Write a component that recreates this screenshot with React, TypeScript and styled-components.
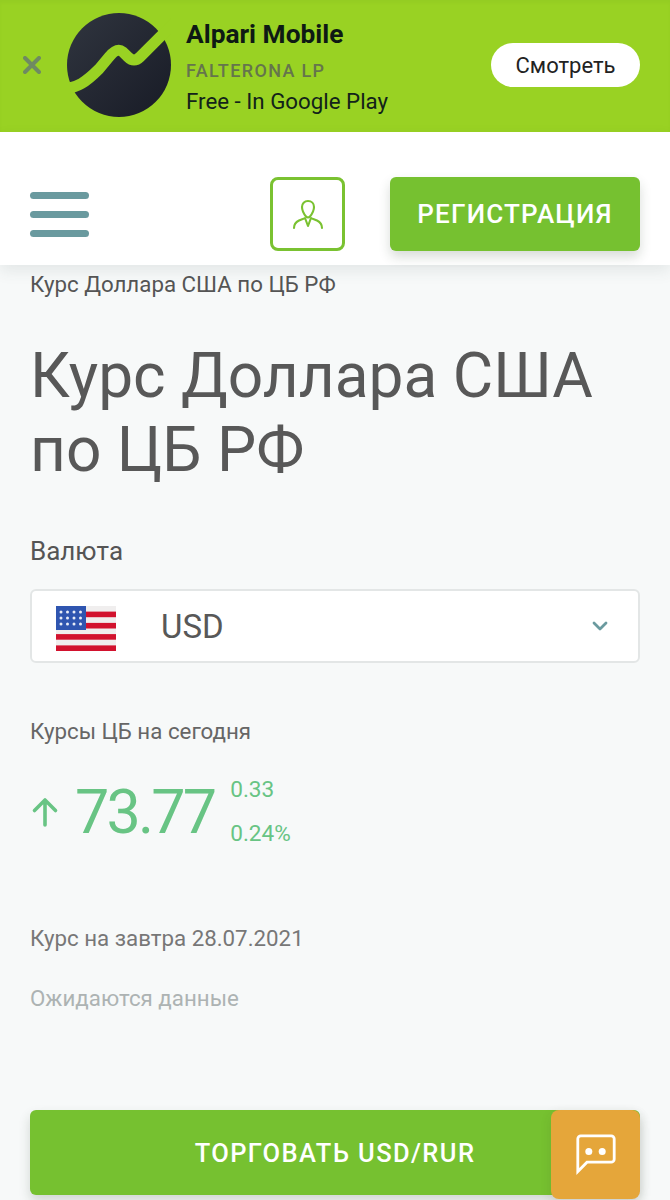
import React from 'react';
import styled, { createGlobalStyle } from 'styled-components';

const GlobalStyle = createGlobalStyle`
  html, body {
    margin: 0;
    padding: 0;
    background: #f7f9f9;
    font-family: Roboto, 'Liberation Sans', sans-serif;
  }
`;

const Page = styled.div`
  position: relative;
  width: 670px;
  height: 1200px;
  overflow: hidden;
  background: #f7f9f9;
`;

const AppBanner = styled.div`
  height: 132px;
  background: #99d223;
  display: flex;
  align-items: center;
  padding: 0 30px 2px 23px;
  box-sizing: border-box;
  box-shadow: inset 0 3px 3px rgba(40, 60, 0, 0.03);
`;

const CloseIcon = styled.svg`
  width: 18px;
  height: 18px;
  margin-right: 26px;
  flex: none;
`;

const AppLogo = styled.svg`
  width: 104px;
  height: 104px;
  flex: none;
  margin-right: 15px;
`;

const AppInfo = styled.div`
  flex: 1;
  display: flex;
  flex-direction: column;
  padding-top: 3px;
  color: #10201a;
`;

const AppName = styled.div`
  font-size: 26.3px;
  line-height: 32px;
  font-weight: 700;
  color: #0e1a14;
`;

const AppVendor = styled.div`
  font-size: 18px;
  line-height: 24px;
  margin-top: 9px;
  font-weight: 500;
  letter-spacing: 1.35px;
  color: #65754c;
`;

const AppPrice = styled.div`
  font-size: 22.3px;
  line-height: 30px;
  margin-top: 3px;
  color: #12231a;
`;

const WatchButton = styled.button`
  width: 149px;
  height: 44px;
  border: 0;
  border-radius: 22px;
  background: #fff;
  color: #222;
  font: 400 22px Roboto, sans-serif;
  padding: 0;
`;

const SiteHeader = styled.header`
  position: relative;
  height: 133px;
  background: #fff;
  display: flex;
  align-items: center;
  padding: 31px 30px 0;
  box-sizing: border-box;
  box-shadow: 0 6px 14px rgba(60, 80, 80, 0.1);
`;

const Burger = styled.div`
  width: 59px;
  display: flex;
  flex-direction: column;
  gap: 12px;
  margin-right: auto;
`;

const BurgerBar = styled.span`
  display: block;
  height: 7px;
  border-radius: 4px;
  background: #6a9a9f;
`;

const UserButton = styled.button`
  width: 75px;
  height: 74px;
  box-sizing: border-box;
  border: 3px solid #7ac231;
  border-radius: 8px;
  background: #fff;
  margin-right: 45px;
  padding: 0;
  display: flex;
  align-items: center;
  justify-content: center;
`;

const PrimaryButton = styled.button<{ $wide?: boolean }>`
  width: ${props => (props.$wide ? '610px' : '250px')};
  height: ${props => (props.$wide ? '85px' : '74px')};
  border: 0;
  border-radius: 6px;
  background: #76c130;
  color: #fff;
  font: 500 ${props => (props.$wide ? '25.5px' : '26px')} Roboto, sans-serif;
  letter-spacing: ${props => (props.$wide ? '1.4px' : '1.2px')};
  padding: 0;
  box-shadow: 0 6px 12px rgba(40, 60, 40, 0.18);
`;

const Content = styled.main`
  padding: 0 30px;
`;

const Breadcrumb = styled.div`
  font-size: 22.3px;
  line-height: 24px;
  margin-top: 7px;
  color: #555;
`;

const Title = styled.h1`
  font-size: 62.2px;
  line-height: 74px;
  font-weight: 400;
  color: #585858;
  margin: 43px 0 0;
`;

const FieldLabel = styled.div`
  font-size: 26px;
  line-height: 30px;
  color: #555;
  margin-top: 49px;
`;

const CurrencySelect = styled.div`
  height: 74px;
  margin-top: 23px;
  box-sizing: border-box;
  background: #fff;
  border: 2px solid #e3e6e6;
  border-radius: 6px;
  display: flex;
  align-items: center;
  padding: 0 28px 0 24px;
`;

const Flag = styled.svg`
  width: 60px;
  height: 45px;
  flex: none;
  margin: 5px 45px 0 0;
`;

const CurrencyCode = styled.span`
  flex: 1;
  font-size: 33px;
  color: #585858;
`;

const Chevron = styled.svg`
  width: 20px;
  height: 20px;
`;

const SectionLabel = styled.div<{ $color: string; $top: number }>`
  font-size: 22.3px;
  line-height: 26px;
  margin-top: ${props => props.$top}px;
  color: ${props => props.$color};
`;

const RateRow = styled.div`
  display: flex;
  align-items: center;
  margin-top: 23px;
  color: #68c484;
`;

const RateArrow = styled.svg`
  width: 30px;
  height: 32px;
  margin-right: 15px;
  flex: none;
`;

const RateValue = styled.div`
  font-size: 61px;
  line-height: 90px;
  letter-spacing: -2.8px;
  margin-right: 16px;
`;

const RateDelta = styled.div`
  display: flex;
  flex-direction: column;
  gap: 18px;
  font-size: 22.6px;
  line-height: 26px;
`;

const CtaWrap = styled.div`
  margin-top: 99px;
`;

const ChatButton = styled.button`
  position: absolute;
  left: 551px;
  top: 1110px;
  width: 89px;
  height: 89px;
  border: 0;
  border-radius: 8px;
  background: #e5a63a;
  box-shadow: 0 4px 12px rgba(60, 60, 40, 0.12);
  padding: 0;
  display: flex;
  align-items: center;
  justify-content: center;
`;

const App: React.FC = () => {
  return (
    <Page>
      <GlobalStyle />
      <AppBanner>
        <CloseIcon viewBox="0 0 18 18">
          <path d="M2 2l14 14M16 2L2 16" stroke="#6f8a62" strokeWidth="4" strokeLinecap="round" />
        </CloseIcon>
        <AppLogo viewBox="0 0 104 104">
          <defs>
            <linearGradient id="logoFill" x1="0" y1="0" x2="1" y2="1">
              <stop offset="0" stopColor="#30353f" />
              <stop offset="1" stopColor="#181b26" />
            </linearGradient>
          </defs>
          <circle cx="52" cy="52" r="52" fill="url(#logoFill)" />
          <path
            d="M-6 76C10 76 20 68 32 56L42 44C47 38 51 35 56 39L61 44C65 48 69 48 73 44L108 9"
            fill="none"
            stroke="#99d223"
            strokeWidth="11"
          />
        </AppLogo>
        <AppInfo>
          <AppName>Alpari Mobile</AppName>
          <AppVendor>FALTERONA LP</AppVendor>
          <AppPrice>Free - In Google Play</AppPrice>
        </AppInfo>
        <WatchButton>Смотреть</WatchButton>
      </AppBanner>

      <SiteHeader>
        <Burger>
          <BurgerBar />
          <BurgerBar />
          <BurgerBar />
        </Burger>
        <UserButton>
          <svg width="32" height="32" viewBox="0 0 32 32" fill="none" stroke="#7ac231" strokeWidth="2.1" strokeLinecap="round" strokeLinejoin="round">
            <path d="M16 3c-3.600 0-6 2.600-6 6 0 3.500 2 7 4 9.500 1 1.200 3 1.200 4 0 2-2.500 4-6 4-9.500 0-3.400-2.400-6-6-6z" />
            <path d="M2 30c0-4 2-6 5-7.500 2.500-1.200 4.500-1.500 6-2.500l3 8 3-8c1.500 1 3.500 1.300 6 2.500 3 1.500 5 3.500 5 7.500" />
          </svg>
        </UserButton>
        <PrimaryButton>РЕГИСТРАЦИЯ</PrimaryButton>
      </SiteHeader>

      <Content>
        <Breadcrumb>Курс Доллара США по ЦБ РФ</Breadcrumb>
        <Title>
          Курс Доллара США
          <br />
          по ЦБ РФ
        </Title>
        <FieldLabel>Валюта</FieldLabel>
        <CurrencySelect>
          <Flag viewBox="0 0 60 45">
            <rect width="60" height="45" fill="#f0eeee" />
            {[5.6, 16.9, 28.1, 39.4].map(y => (
              <rect key={y} y={y} width="60" height="5.6" fill="#d2122e" />
            ))}
            <rect width="30" height="24" fill="#2f55b0" />
            {[6, 12, 18].map(cy =>
              [5, 11.5, 18, 24.5].map(cx => <circle key={`${cx}-${cy}`} cx={cx} cy={cy} r="1.500" fill="#e8ecf6" />)
            )}
          </Flag>
          <CurrencyCode>USD</CurrencyCode>
          <Chevron viewBox="0 0 20 20">
            <path d="M4 7l6 6 6-6" fill="none" stroke="#6a9a9f" strokeWidth="2.800" strokeLinecap="round" strokeLinejoin="round" />
          </Chevron>
        </CurrencySelect>

        <SectionLabel $color="#666" $top={55}>Курсы ЦБ на сегодня</SectionLabel>
        <RateRow>
          <RateArrow viewBox="0 0 30 32">
            <path d="M15 29V4M4.500 14.500L15 4l10.500 10.500" fill="none" stroke="#68c484" strokeWidth="3.600" strokeLinecap="round" strokeLinejoin="round" />
          </RateArrow>
          <RateValue>73.77</RateValue>
          <RateDelta>
            <span>0.33</span>
            <span>0.24%</span>
          </RateDelta>
        </RateRow>

        <SectionLabel $color="#777" $top={68}>Курс на завтра 28.07.2021</SectionLabel>
        <SectionLabel $color="#adb3b3" $top={34}>Ожидаются данные</SectionLabel>

        <CtaWrap>
          <PrimaryButton $wide>ТОРГОВАТЬ USD/RUR</PrimaryButton>
        </CtaWrap>
      </Content>

      <ChatButton>
        <svg width="44" height="44" viewBox="0 0 44 44" fill="none">
          <path
            d="M3.800 38.500V5.800a3 3 0 0 1 3-3h30.400a3 3 0 0 1 3 3v20.400a3 3 0 0 1-3 3H13z"
            stroke="#fff"
            strokeWidth="2.800"
          />
          <circle cx="14.800" cy="18.500" r="3.500" fill="#fff" />
          <circle cx="28.200" cy="18.500" r="3.500" fill="#fff" />
        </svg>
      </ChatButton>
    </Page>
  );
};

export default App;
